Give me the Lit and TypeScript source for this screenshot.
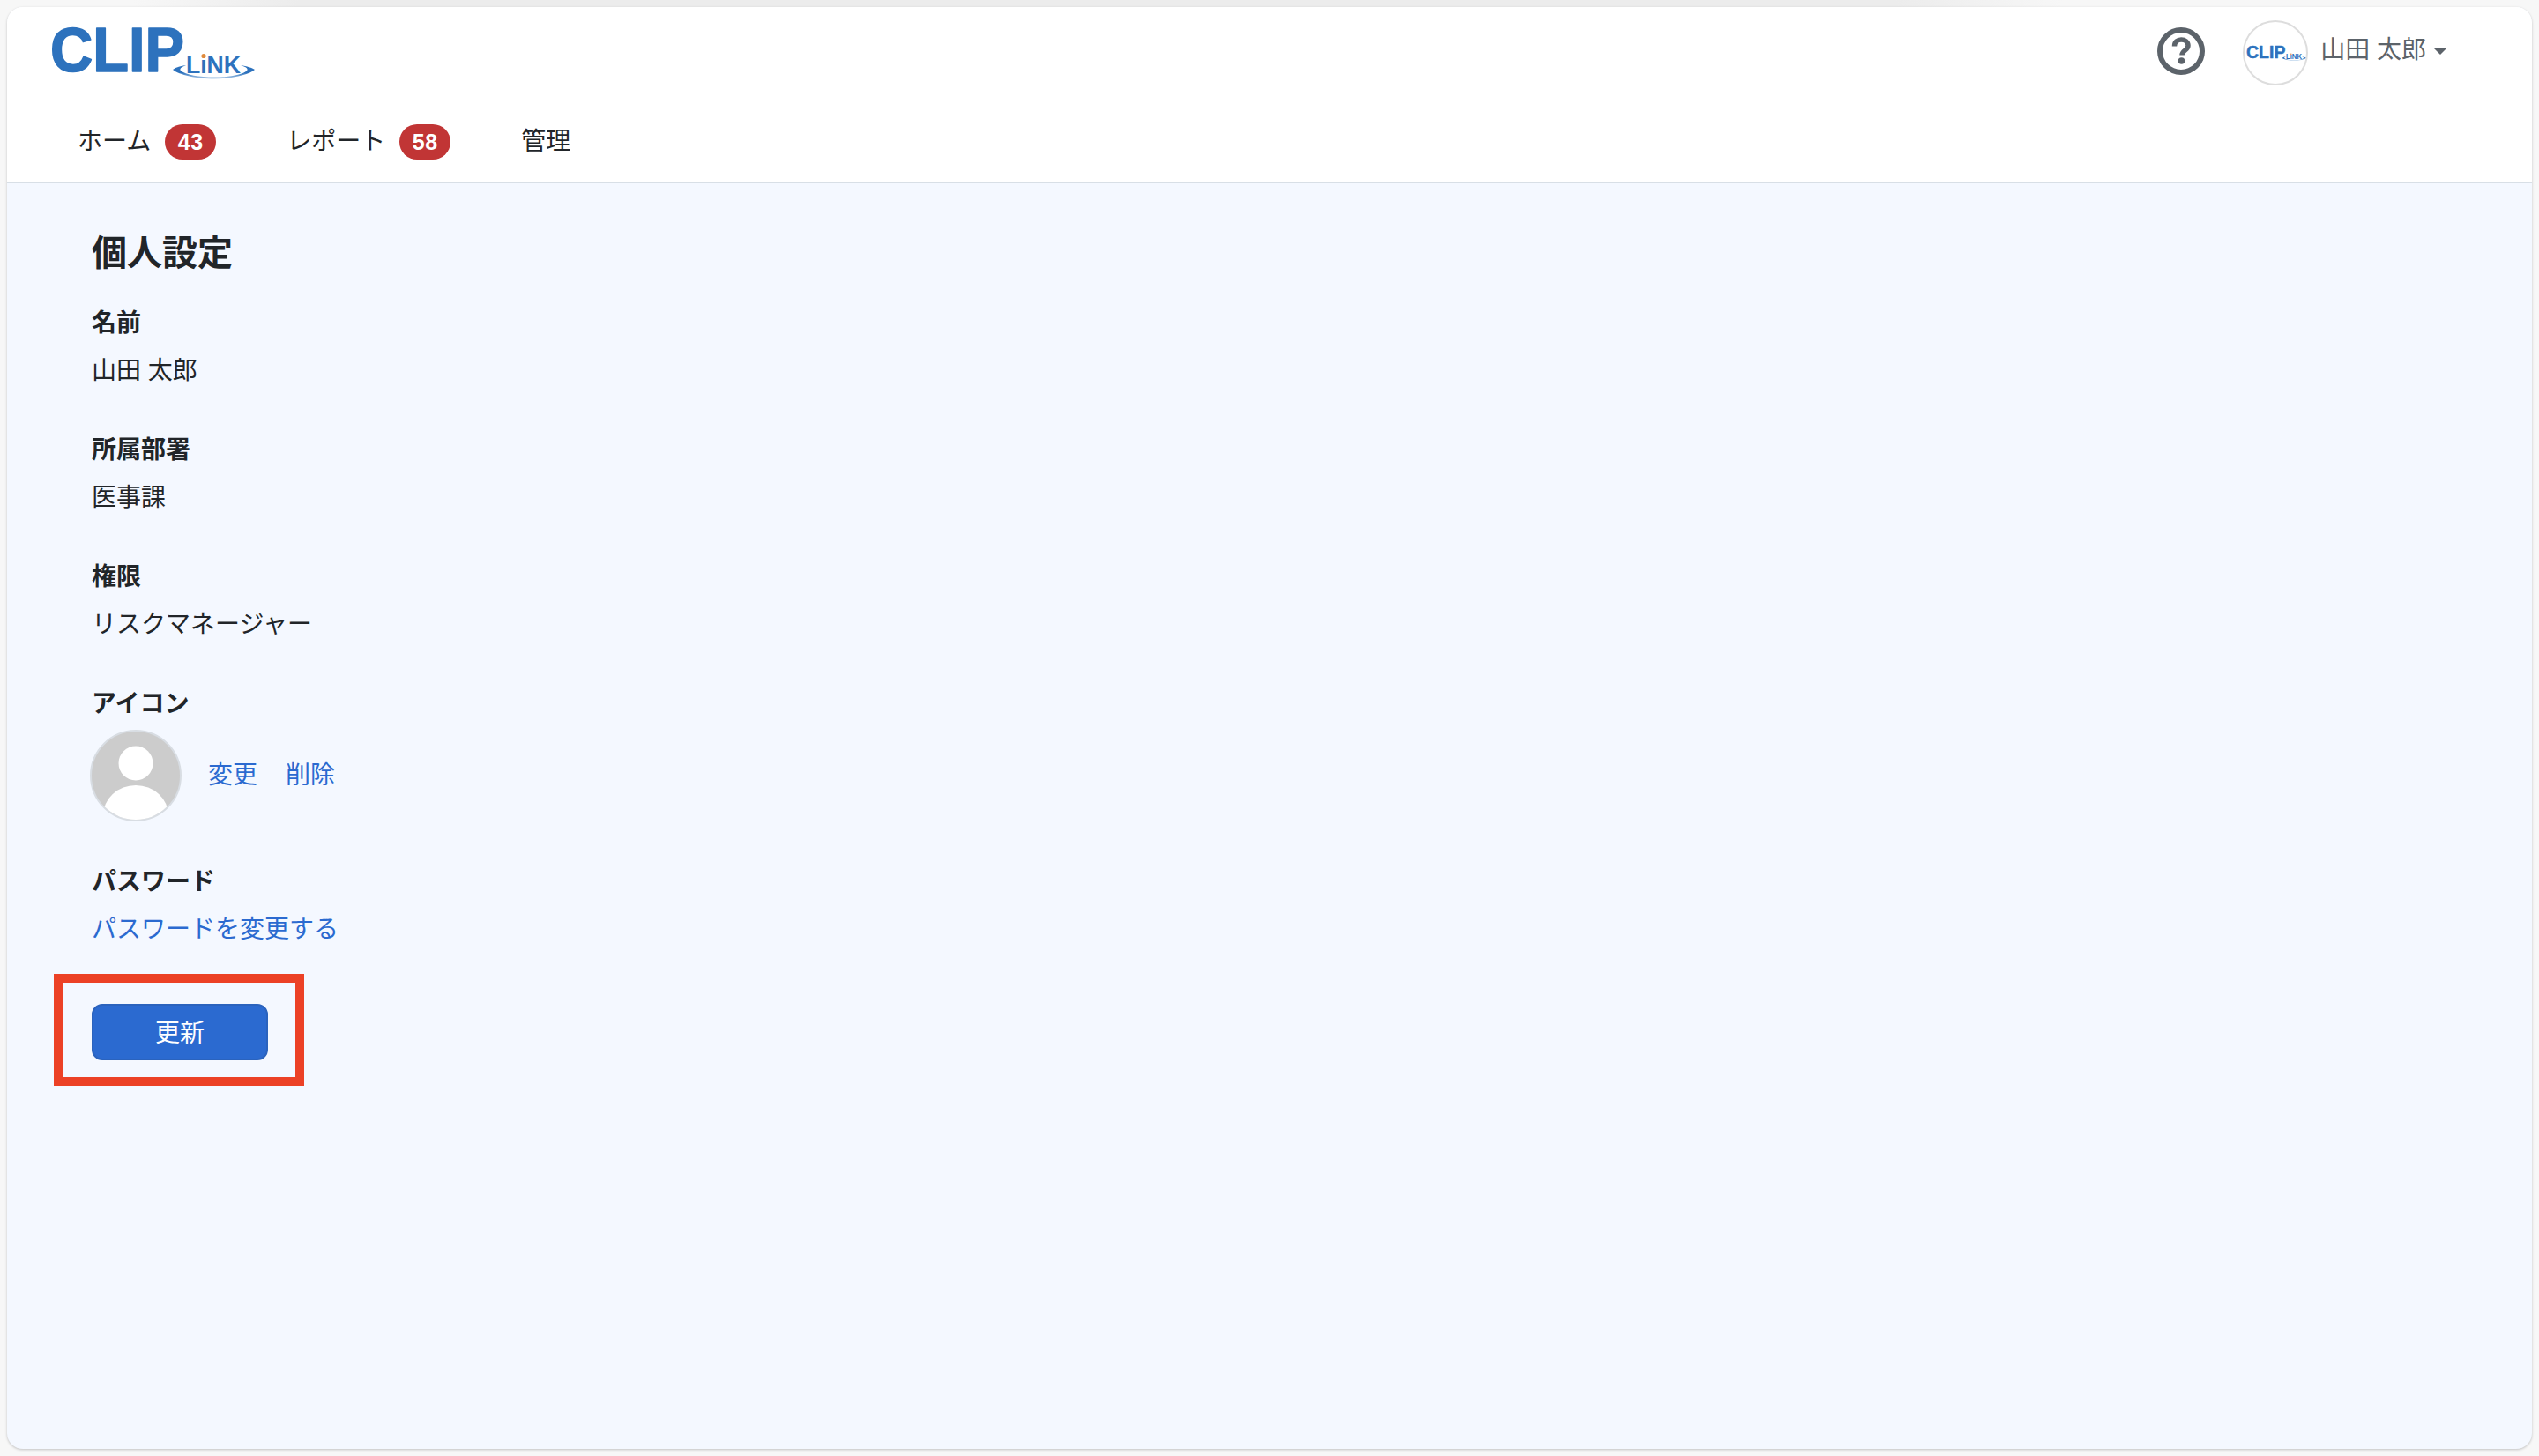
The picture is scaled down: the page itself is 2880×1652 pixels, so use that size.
import { html, css, LitElement } from "lit";
import { customElement, property } from "lit/decorators.js";

const SANS = css`"Liberation Sans", "Noto Sans CJK JP", sans-serif`;

@customElement("clip-logo")
class ClipLogo extends LitElement {
    static styles = css`
        :host {
            display: block;
            line-height: 0;
        }
        svg {
            display: block;
            width: 100%;
            height: auto;
            overflow: visible;
        }
        .clip {
            font-family: ${SANS};
            font-weight: 700;
            font-size: 70px;
            fill: #2d72bd;
            stroke: #2d72bd;
            stroke-width: 1.6px;
            stroke-linejoin: round;
        }
        .link {
            font-family: ${SANS};
            font-weight: 700;
            font-size: 28px;
            fill: #2d72bd;
        }
    `;

    render() {
        return html`
            <svg viewBox="0 0 240 75">
                <defs>
                    <linearGradient id="ring" x1="0" y1="0" x2="0" y2="1">
                        <stop offset="0.55" stop-color="#2d72bd"></stop>
                        <stop offset="1" stop-color="#b4cfea"></stop>
                    </linearGradient>
                </defs>
                <text class="clip" x="7" y="56" textLength="152" lengthAdjust="spacingAndGlyphs">CLIP</text>
                <path d="M146 54 C150 51 155 50 161 49 C156 51 153 53 155 55 C160 60 176 62.5 193 62.5 C210 62.5 225 60 230 55 C232 53 229 51 223 49 C230 50 236 52 239 54 C232 60 212 64.5 193 64.5 C174 64.5 153 60 146 54 Z" fill="url(#ring)"></path>
                <text class="link" x="161" y="58" textLength="62" lengthAdjust="spacingAndGlyphs">LıNK</text>
                <circle cx="181" cy="38.5" r="2.6" fill="#e08a3c"></circle>
            </svg>
        `;
    }
}

@customElement("app-header")
class AppHeader extends LitElement {
    static styles = css`
        :host {
            display: block;
            background: #fff;
            border-bottom: 2px solid #d8dfe6;
            border-radius: 18px 18px 0 0;
        }
        .top {
            display: flex;
            align-items: center;
            justify-content: space-between;
            height: 104px;
            padding: 0 96px 0 42px;
        }
        .logo {
            width: 240px;
            margin-top: 5px;
        }
        .right {
            display: flex;
            align-items: center;
        }
        .help {
            display: block;
            width: 54px;
            height: 54px;
            margin: -5px 43px 0 0;
        }
        .avatar {
            box-sizing: border-box;
            width: 74px;
            height: 74px;
            border: 2px solid #dddddd;
            border-radius: 50%;
            background: #fff;
            display: flex;
            align-items: center;
            justify-content: center;
            margin-right: 14px;
        }
        .avatar clip-logo {
            flex: none;
            width: 70px;
            margin-top: 2px;
        }
        .user {
            font-size: 28px;
            line-height: 42px;
            color: #5c636a;
            margin-top: -6px;
        }
        .caret {
            width: 0;
            height: 0;
            margin: -4px 0 0 8px;
            border-top: 8px solid #5c636a;
            border-left: 8px solid transparent;
            border-right: 8px solid transparent;
        }
        nav {
            box-sizing: border-box;
            display: flex;
            height: 94px;
            align-items: center;
            padding: 4px 0 0 40px;
        }
        .tab {
            display: flex;
            align-items: center;
            gap: 16px;
            padding: 0 40px;
            font-size: 28px;
            line-height: 42px;
            color: #212529;
        }
        .badge {
            width: 58px;
            height: 40px;
            border-radius: 20px;
            background: #c13535;
            color: #fff;
            font-family: "Liberation Sans", sans-serif;
            font-weight: 700;
            font-size: 25px;
            letter-spacing: 0.5px;
            line-height: 41px;
            text-align: center;
        }
    `;

    render() {
        return html`
            <div class="top">
                <clip-logo class="logo"></clip-logo>
                <div class="right">
                    <svg class="help" viewBox="0 0 54 54">
                        <circle cx="27" cy="27" r="24" fill="none" stroke="#5c636a" stroke-width="6"></circle>
                        <path d="M19.5 21.5 C19.5 16.5 23 14 27.2 14 C31.6 14 35 16.7 35 20.7 C35 26 28 26.2 28 31.5" fill="none" stroke="#5c636a" stroke-width="5.5"></path>
                        <circle cx="27.5" cy="38" r="3.8" fill="#5c636a"></circle>
                    </svg>
                    <div class="avatar"><clip-logo></clip-logo></div>
                    <span class="user">山田 太郎</span>
                    <span class="caret"></span>
                </div>
            </div>
            <nav>
                <div class="tab">ホーム<span class="badge">43</span></div>
                <div class="tab">レポート<span class="badge">58</span></div>
                <div class="tab">管理</div>
            </nav>
        `;
    }
}

@customElement("setting-field")
class SettingField extends LitElement {
    @property({ type: String })
    label: string = "";

    static styles = css`
        :host {
            display: block;
            margin-bottom: 48px;
        }
        .label {
            font-weight: 700;
            font-size: 28px;
            line-height: 42px;
            margin-bottom: 12px;
            color: #212529;
        }
        .value {
            font-size: 28px;
            line-height: 42px;
            color: #212529;
        }
    `;

    render() {
        return html`
            <div class="label">${this.label}</div>
            <div class="value"><slot></slot></div>
        `;
    }
}

@customElement("app-root")
class AppRoot extends LitElement {
    static styles = css`
        :host {
            display: block;
            font-family: "Liberation Sans", "Noto Sans CJK JP", sans-serif;
        }
        .page {
            box-sizing: border-box;
            height: 100vh;
            padding: 8px;
            background-color: #f7f7f7;
            background-image: linear-gradient(90deg, #f7f7f7 150px, #ececec 340px, #ececec 2150px, #f7f7f7 2340px);
            background-size: 100% 8px;
            background-repeat: no-repeat;
        }
        .card {
            display: flex;
            flex-direction: column;
            height: 100%;
            border-radius: 18px;
            background: #f4f8ff;
            box-shadow: 0 1px 3px rgba(0, 0, 0, 0.22);
        }
        main {
            padding: 49px 96px 0;
        }
        h1 {
            margin: 0 0 29px;
            font-size: 40px;
            line-height: 60px;
            font-weight: 700;
            color: #212529;
        }
        a {
            color: #2b6ad0;
            text-decoration: none;
        }
        .icon-row {
            display: flex;
            align-items: center;
            gap: 30px;
            margin: -4px 0 0 -2px;
        }
        .icon-row svg {
            display: block;
            width: 104px;
            height: 104px;
        }
        .links {
            display: flex;
            gap: 32px;
        }
        .submit {
            position: relative;
            width: 200px;
            margin-top: 63px;
        }
        button {
            display: block;
            width: 200px;
            height: 64px;
            padding: 0 0 3px;
            border: 2px solid #2b63bd;
            border-radius: 12px;
            background: #2b6ad0;
            color: #fff;
            font: inherit;
            font-size: 28px;
        }
        .marker {
            position: absolute;
            left: -43px;
            top: -34px;
            width: 284px;
            height: 127px;
            box-sizing: border-box;
            border: 10px solid #ec4126;
        }
    `;

    render() {
        return html`
            <div class="page">
                <div class="card">
                    <app-header></app-header>
                    <main>
                        <h1>個人設定</h1>
                        <setting-field label="名前">山田 太郎</setting-field>
                        <setting-field label="所属部署">医事課</setting-field>
                        <setting-field label="権限">リスクマネージャー</setting-field>
                        <setting-field label="アイコン">
                            <div class="icon-row">
                                <svg viewBox="0 0 104 104">
                                    <defs>
                                        <clipPath id="face"><circle cx="52" cy="52" r="50"></circle></clipPath>
                                    </defs>
                                    <circle cx="52" cy="52" r="51" fill="#cccccc" stroke="#d8dde3" stroke-width="2"></circle>
                                    <circle cx="52" cy="38" r="19.5" fill="#fff"></circle>
                                    <ellipse cx="52" cy="97" rx="37" ry="34" fill="#fff" clip-path="url(#face)"></ellipse>
                                </svg>
                                <div class="links"><a>変更</a><a>削除</a></div>
                            </div>
                        </setting-field>
                        <setting-field label="パスワード"><a>パスワードを変更する</a></setting-field>
                        <div class="submit">
                            <button>更新</button>
                            <div class="marker"></div>
                        </div>
                    </main>
                </div>
            </div>
        `;
    }
}

export default AppRoot;
